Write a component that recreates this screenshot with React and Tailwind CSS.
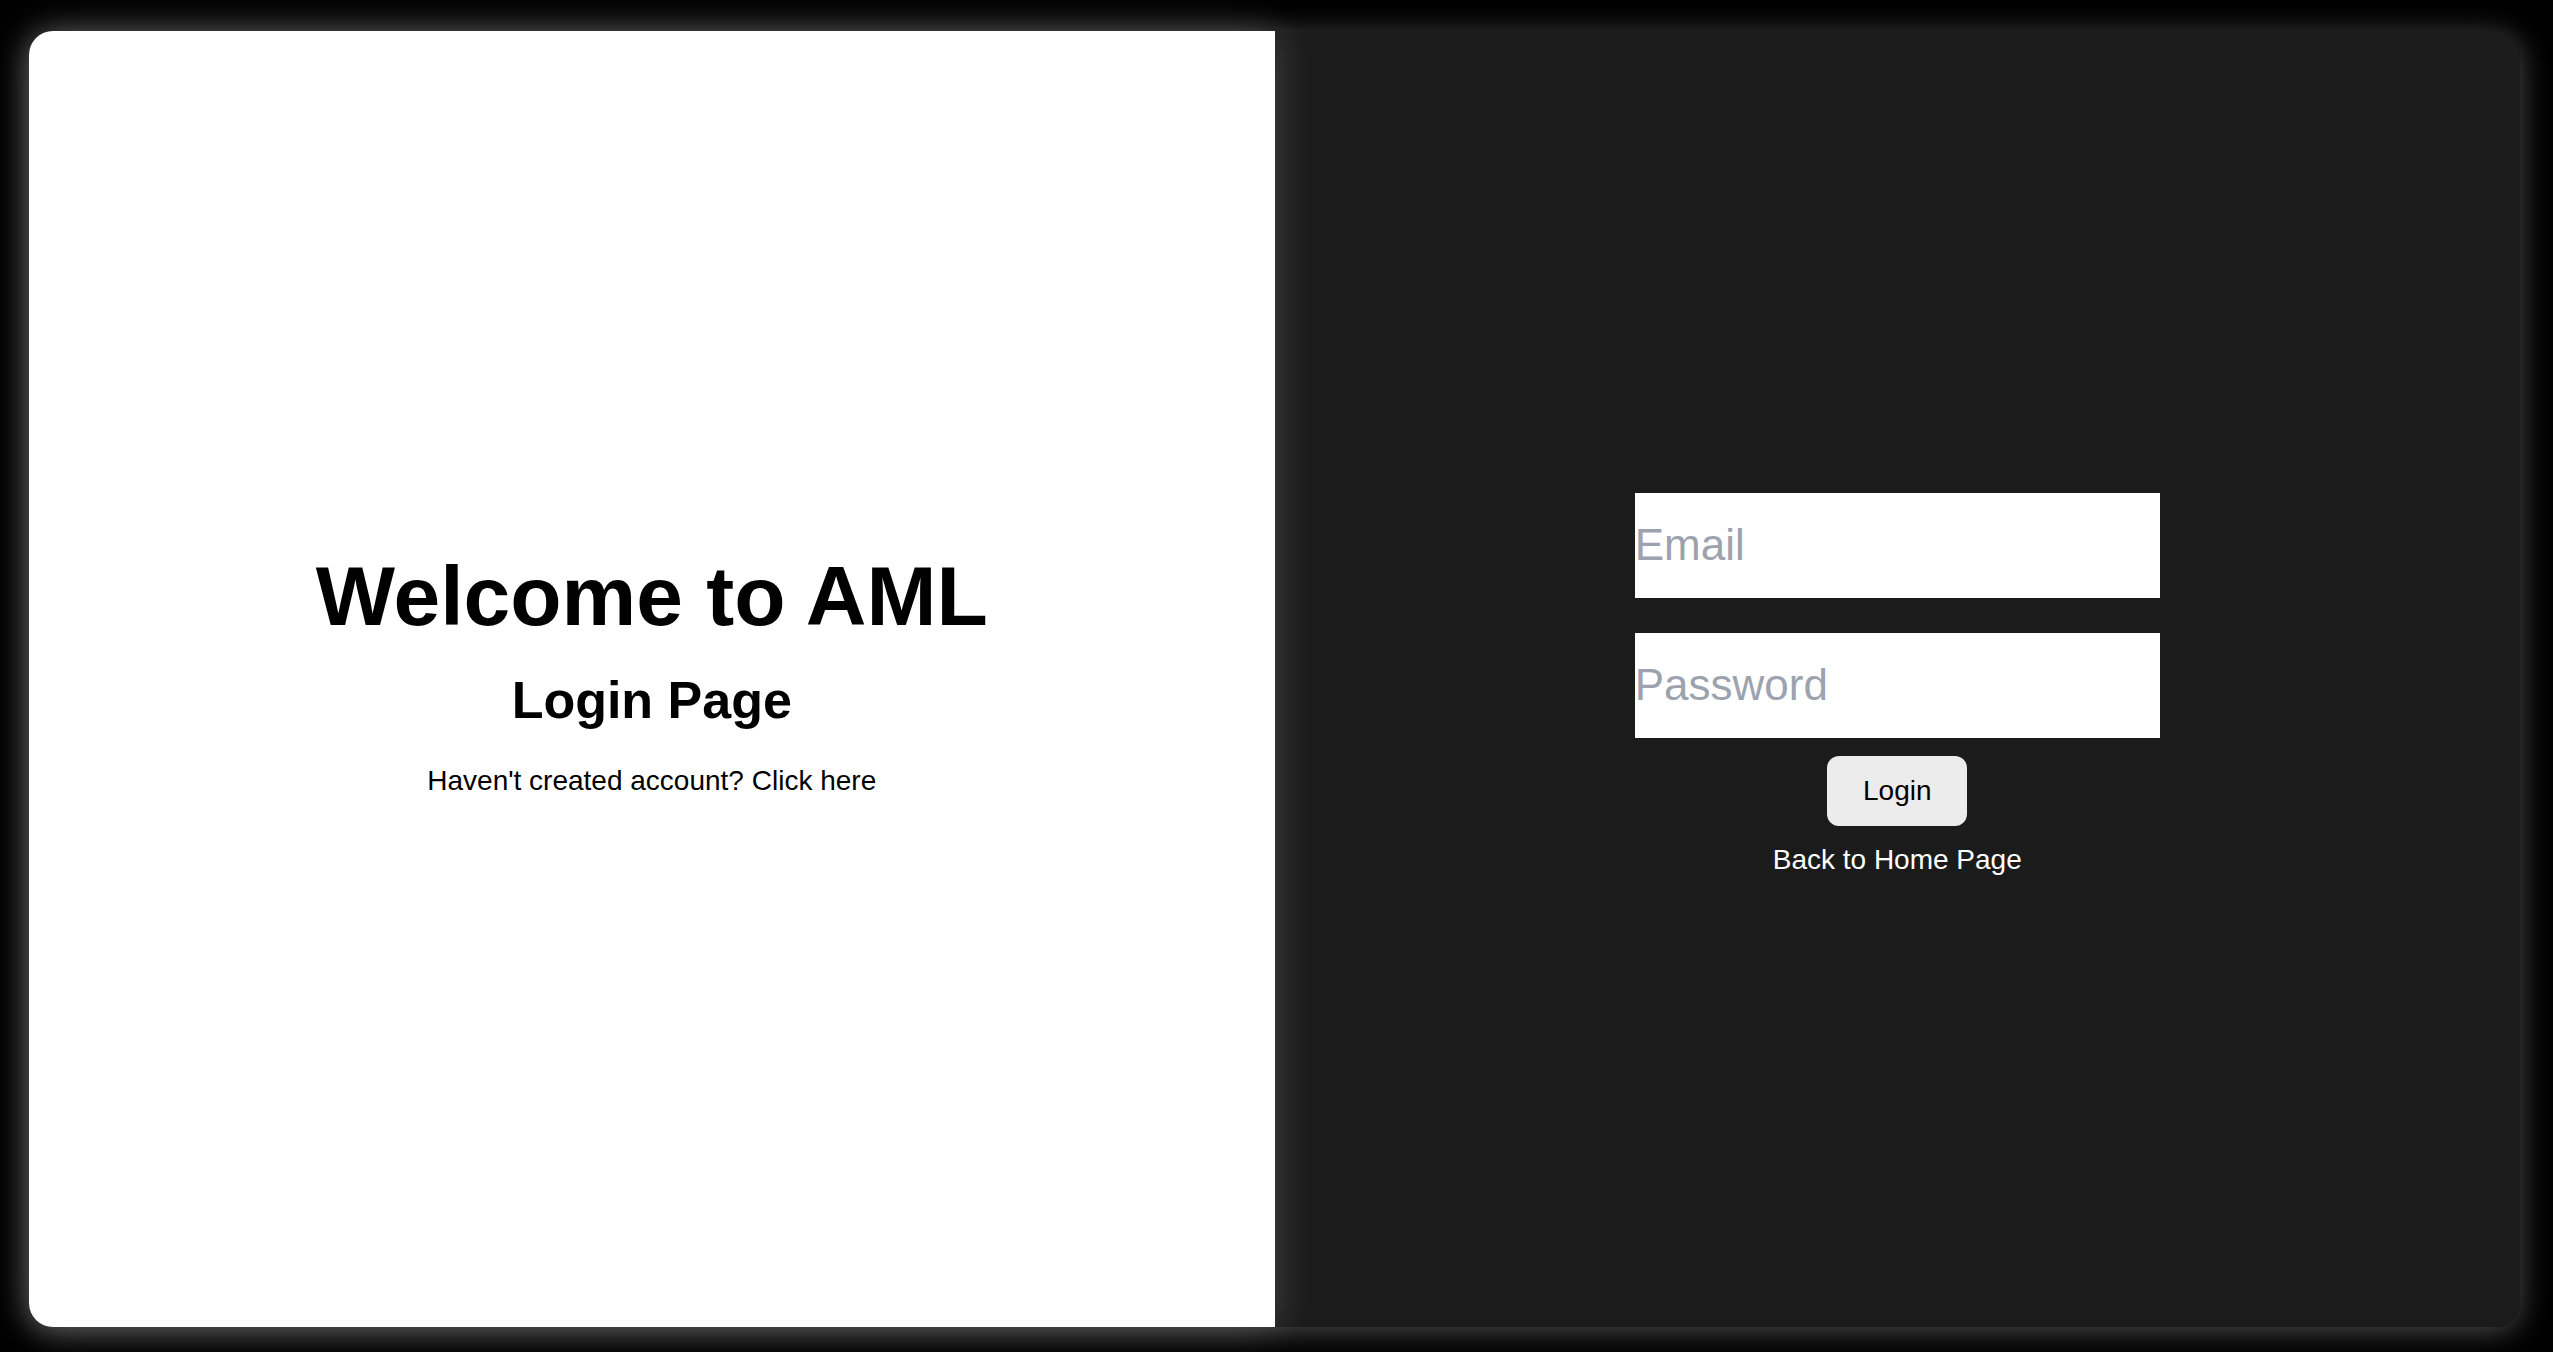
const LoginPage = () => {
  return (
    <div className="h-[1352px] w-full bg-black pt-[31px] font-['Liberation_Sans',Arial,sans-serif] overflow-hidden">
      <div className="ml-[29px] flex h-[1296px] w-[2491px] rounded-[24px] shadow-[0_4px_30px_rgba(255,255,255,0.3)]">
        <div className="relative z-10 flex flex-1 flex-col items-center justify-center rounded-l-[24px] bg-white pb-[14px] text-black shadow-[0_0_40px_rgba(255,255,255,0.2)]">
          <h1 className="text-[84px] font-bold leading-[normal]">Welcome to AML</h1>
          <h2 className="mt-[25px] text-[52px] font-bold leading-[normal]">Login Page</h2>
          <p className="mt-[35px] text-[28px] leading-[normal]">
            Haven't created account? <a href="#">Click here</a>
          </p>
        </div>

        <div className="flex flex-1 flex-col items-center justify-center rounded-r-[24px] bg-[#1b1b1b] pt-[10px]">
          <input
            type="email"
            placeholder="Email"
            className="h-[105px] w-[525px] bg-white px-0 text-[44px] text-black outline-none placeholder:text-[#9ca3af]"
          />
          <input
            type="password"
            placeholder="Password"
            className="mt-[35px] h-[105px] w-[525px] bg-white px-0 text-[44px] text-black outline-none placeholder:text-[#9ca3af]"
          />
          <button className="mt-[18px] h-[70px] w-[140px] rounded-[12px] bg-[#ececec] text-[28px] text-black">
            Login
          </button>
          <a href="#" className="mt-[18px] text-[28px] leading-[normal] text-white">
            Back to Home Page
          </a>
        </div>
      </div>
    </div>
  );
};

export default LoginPage;
